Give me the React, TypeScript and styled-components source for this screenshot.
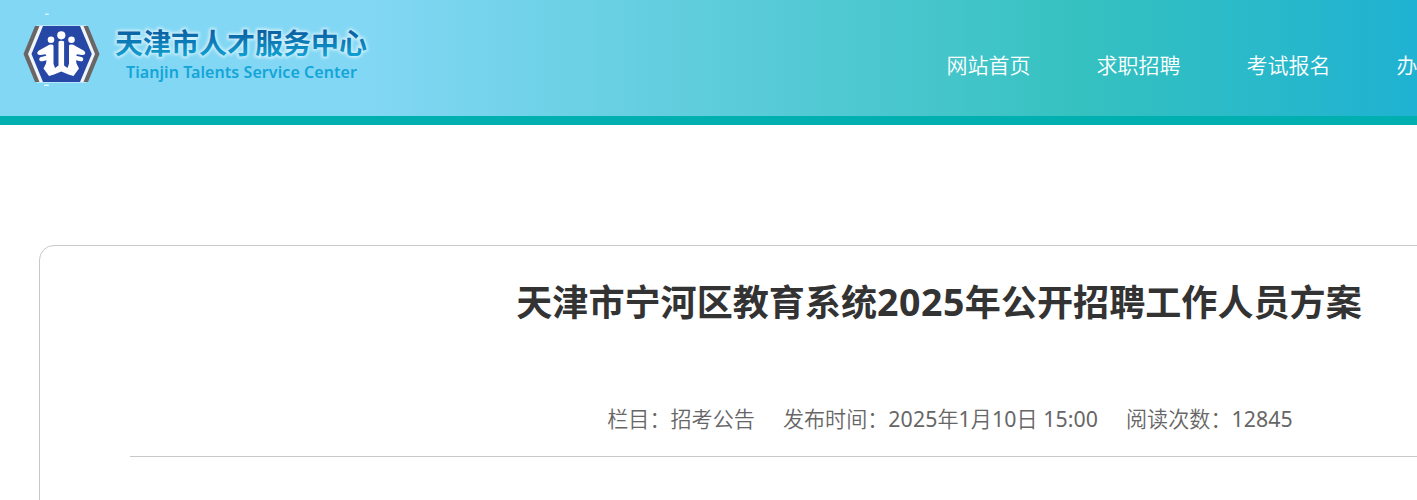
import React, { FC } from 'react';
import styled, { createGlobalStyle } from 'styled-components';

const GlobalStyle = createGlobalStyle`
  body {
    margin: 0;
    background: #fff;
    overflow: hidden;
    font-family: 'Noto Sans', 'Noto Sans CJK SC', sans-serif;
  }
`;

const Page = styled.div`
  width: 100%;
  height: 500px;
  overflow: hidden;
`;

const Header = styled.header`
  display: flex;
  justify-content: space-between;
  box-sizing: border-box;
  height: 125px;
  overflow: hidden;
  border-bottom: 9px solid #00b0b0;
  background: linear-gradient(
    90deg,
    #82d7f4 0,
    #82d7f4 370px,
    #35c1c0 1085px,
    #1fb2d2 1417px
  );
  background-origin: border-box;
`;

const Logo = styled.svg`
  flex: none;
  width: 380px;
  height: 116px;
`;

const Nav = styled.nav`
  display: flex;
  flex: none;
  gap: 66px;
  box-sizing: border-box;
  width: 470.5px;
  padding-top: 48px;
  overflow: hidden;
`;

const NavItem = styled.a`
  flex: none;
  color: #fff;
  font-family: 'Noto Sans CJK SC', sans-serif;
  font-size: 21px;
  font-weight: 350;
  line-height: 32px;
  white-space: nowrap;
`;

const Article = styled.main`
  box-sizing: border-box;
  width: 1800px;
  height: 600px;
  margin: 120px 0 0 39px;
  padding: 30px 90px 0;
  border: 1px solid #c8c8c8;
  border-radius: 15px;
`;

const Title = styled.h1`
  margin: 0;
  color: #333;
  font-family: 'Noto Sans CJK SC', sans-serif;
  font-size: 36.1px;
  font-weight: 700;
  line-height: 48px;
  height: 48px;
  text-align: center;
  white-space: nowrap;
`;

const TitleNumber = styled.span`
  font-family: 'Noto Sans', sans-serif;
  font-size: 37.5px;
  letter-spacing: 0.5px;
  line-height: 1;
`;

const Meta = styled.div`
  display: flex;
  justify-content: center;
  gap: 28px;
  box-sizing: border-box;
  height: 133px;
  padding-top: 78px;
  border-bottom: 1px solid #c8c8c8;
  padding-left: 22px;
`;

const MetaItem = styled.span`
  color: #666;
  font-family: 'Noto Sans CJK SC', sans-serif;
  font-size: 21.1px;
  font-weight: 350;
  line-height: 32px;
  white-space: nowrap;
`;

const MetaNumber = styled.span`
  font-family: 'Noto Sans', sans-serif;
  font-size: 21.3px;
  font-weight: 400;
  letter-spacing: 0.08px;
  line-height: 1;
`;

const navItems = ['网站首页', '求职招聘', '考试报名', '办事指南'];

const SiteLogo: FC = () => (
  <Logo viewBox="0 0 380 116">
    <defs>
      <linearGradient id="name" x1="0" y1="0" x2="0" y2="1">
        <stop offset="0.25" stopColor="#0b62a4" />
        <stop offset="0.9" stopColor="#10a5d6" />
      </linearGradient>
      <filter id="glow" x="-5%" y="-30%" width="110%" height="160%">
        <feGaussianBlur stdDeviation="1.5" />
      </filter>
    </defs>
    <path d="M37 25.500h49l12 28.500-12 28.500H37L25 54z" fill="#eef5fb" />
    <path
      d="M39.500 26h-4.500L23.500 54 35 82h4.500L28 54zM83.500 26H88l11.500 28L88 82h-4.500L95 54z"
      fill="#6b6666"
    />
    <path d="M43 26h37l11.800 28L80 82H43L31.500 54z" fill="#2647a5" />
    <g fill="#fff">
      <circle cx="61.300" cy="35.300" r="4.100" />
      <circle cx="51" cy="39.800" r="3.300" />
      <circle cx="71.500" cy="39.800" r="3.300" />
      <path d="M58.500 42q0-1.300 2.800-1.300t2.800 1.300v23.500l3.400 2.500 1.500-4.300v-18q0-1.200 2.500-1.200 2 0 3.500 1.200l9 5q2 1.800 1 3.300-1 1.300-3 1l-5-.8-.8 1.500 6 1.500q1.800 1.300.8 3.300-1.200 1.200-3 .7l-4-1 .5 3.300 2.500 5-5.500 7.500-5-1.500-7.200-3-7.300 3-5 1.500-5.500-7.500 2.500-5 .5-3.300-4 1q-1.800.5-3-.7-1-2 .8-3.300l6-1.500-.8-1.500-5 .8q-2 .3-3-1-1-1.500 1-3.300l9-5q1.500-1.200 3.500-1.200 2.500 0 2.500 1.200v18l1.500 4.300 3.500-2.500z" />
      <rect x="45" y="13.500" width="4" height="1.500" rx=".7" opacity=".7" />
      <rect x="44" y="84.500" width="5" height="1.500" rx=".7" opacity=".8" />
    </g>
    <g
      fontFamily="'Noto Sans CJK SC', sans-serif"
      fontSize="28"
      fontWeight="700"
    >
      <text
        x="115"
        y="54"
        textLength="252"
        fill="#fff"
        stroke="#fff"
        strokeWidth="3"
        opacity=".65"
        filter="url(#glow)"
      >
        天津市人才服务中心
      </text>
      <text x="115" y="54" textLength="252" fill="url(#name)">
        天津市人才服务中心
      </text>
    </g>
    <text
      x="126"
      y="78"
      textLength="231"
      fill="#14a5d8"
      fontFamily="'Noto Sans', sans-serif"
      fontSize="16"
      fontWeight="600"
    >
      Tianjin Talents Service Center
    </text>
  </Logo>
);

const App: FC = () => (
  <>
    <GlobalStyle />
    <Page>
      <Header>
        <SiteLogo />
        <Nav>
          {navItems.map(item => (
            <NavItem key={item}>{item}</NavItem>
          ))}
        </Nav>
      </Header>
      <Article>
        <Title>
          天津市宁河区教育系统<TitleNumber>2025</TitleNumber>
          年公开招聘工作人员方案
        </Title>
        <Meta>
          <MetaItem>栏目：招考公告</MetaItem>
          <MetaItem>
            发布时间：<MetaNumber>2025</MetaNumber>年
            <MetaNumber>1</MetaNumber>月<MetaNumber>10</MetaNumber>日
            <MetaNumber> 15:00</MetaNumber>
          </MetaItem>
          <MetaItem>
            阅读次数：<MetaNumber>12845</MetaNumber>
          </MetaItem>
        </Meta>
      </Article>
    </Page>
  </>
);

export default App;
